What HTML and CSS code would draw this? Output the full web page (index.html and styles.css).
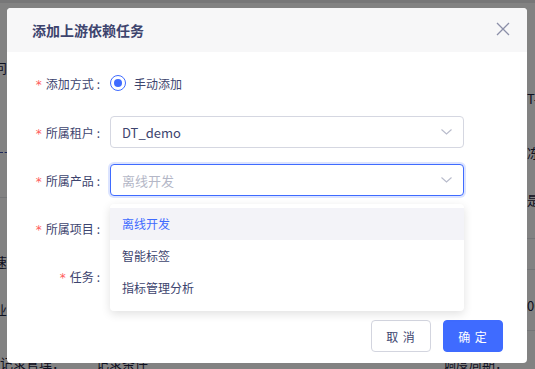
FILE: index.html
```html
<!DOCTYPE html>
<html lang="zh-CN">
<head>
    <meta charset="UTF-8">
    <title>添加上游依赖任务</title>
    <link rel="stylesheet" href="styles.css">
</head>
<body>
    <!-- page behind the modal -->
    <div class="page">
        <div class="page-topbar"></div>
        <div class="page-main">
            <div class="page-col page-col-left">
                <div class="bg-text bg-left" style="margin-top: 57px">问</div>
                <div class="bg-line bg-line-blue" style="margin-top: 76px"></div>
                <div class="bg-line" style="margin-top: 44px"></div>
                <div class="bg-text bg-left" style="margin-top: 56px">速</div>
                <div class="bg-text bg-left" style="margin-top: 32px">业</div>
            </div>
            <div class="page-col page-col-right">
                <div class="bg-text" style="margin-top: 88px">T-</div>
                <div class="bg-text" style="margin-top: 38px">冻</div>
                <div class="bg-text" style="margin-top: 31px">是</div>
                <div class="bg-line" style="margin-top: 30px"></div>
                <div class="bg-line" style="margin-top: 30px"></div>
                <div class="bg-text" style="margin-top: 28px">0C</div>
                <div class="bg-line" style="margin-top: 16px"></div>
            </div>
        </div>
        <div class="page-bottom">
            <span class="pb-label">记录管理：</span>
            <span class="pb-sep"></span>
            <span class="pb-sep pb-sep-2"></span>
            <span class="pb-value">记录条件</span>
            <span class="pb-sep pb-sep-3"></span>
            <span class="pb-label pb-right">调度周期：</span>
            <span class="pb-sep pb-sep-4"></span>
            <span class="pb-value">天</span>
        </div>
    </div>
    <div class="mask"></div>

    <div class="modal">
        <div class="modal-header">
            <span class="modal-title">添加上游依赖任务</span>
            <span class="modal-close">
                <svg width="14" height="14" viewBox="0 0 14 14">
                    <path d="M1 1 L13 13 M13 1 L1 13" stroke="#8b8fa8" stroke-width="1.3" fill="none"/>
                </svg>
            </span>
        </div>

        <div class="modal-body">
            <div class="form-row form-row-first">
                <label class="form-label"><span class="req">*</span>添加方式</label>
                <div class="form-control radio-group">
                    <span class="radio"><span class="radio-dot"></span></span>
                    <span>手动添加</span>
                </div>
            </div>
            <div class="form-row">
                <label class="form-label"><span class="req">*</span>所属租户</label>
                <div class="form-control">
                    <div class="select">
                        <span class="select-value">DT_demo</span>
                        <span class="select-arrow"><svg width="11" height="6" viewBox="0 0 11 6"><path d="M0.5 0.5 L5.5 5 L10.5 0.5" stroke="#b8bbcb" stroke-width="1.1" fill="none"/></svg></span>
                    </div>
                </div>
            </div>
            <div class="form-row">
                <label class="form-label"><span class="req">*</span>所属产品</label>
                <div class="form-control select-wrap">
                    <div class="select select-focused">
                        <span class="select-value placeholder">离线开发</span>
                        <span class="select-arrow"><svg width="11" height="6" viewBox="0 0 11 6"><path d="M0.5 0.5 L5.5 5 L10.5 0.5" stroke="#b8bbcb" stroke-width="1.1" fill="none"/></svg></span>
                    </div>
                    <ul class="dropdown">
                        <li class="dropdown-item active">离线开发</li>
                        <li class="dropdown-item">智能标签</li>
                        <li class="dropdown-item">指标管理分析</li>
                    </ul>
                </div>
            </div>
            <div class="form-row">
                <label class="form-label"><span class="req">*</span>所属项目</label>
                <div class="form-control"></div>
            </div>
            <div class="form-row">
                <label class="form-label"><span class="req">*</span>任务</label>
                <div class="form-control"></div>
            </div>
        </div>

        <div class="modal-footer">
            <button class="btn">取 消</button>
            <button class="btn btn-primary">确 定</button>
        </div>
    </div>
</body>
</html>
```

FILE: styles.css
```css
:root {
    --text: #3d446e;
    --blue: #3f6bff;
    --border: #d5d7e1;
    --placeholder: #b4b7c7;
    --font: "Noto Sans CJK SC", "Noto Sans", sans-serif;
}

* {
    box-sizing: border-box;
    margin: 0;
    padding: 0;
}

body {
    width: 535px;
    height: 369px;
    overflow: hidden;
    position: relative;
    font-family: var(--font);
    font-size: 12px;
    color: var(--text);
    background: #fff;
}

/* Page behind the modal */
.page {
    height: 100%;
    display: flex;
    flex-direction: column;
}

.page-topbar {
    height: 3px;
    background: #e9e9ec;
}

.page-main {
    flex: 1;
    display: flex;
    justify-content: space-between;
}

.page-col-left {
    width: 30px;
}

.page-col-right {
    width: 8px;
    display: flex;
    flex-direction: column;
}

.bg-text {
    font-size: 13px;
    line-height: 16px;
    color: #1d2240;
    white-space: nowrap;
}

.bg-left {
    margin-left: -6px;
}

.bg-line {
    height: 1px;
    background: #e4e5ea;
}

.bg-line-blue {
    border-top: 1px dashed #3a4fb0;
    background: none;
    width: 26px;
}

.page-bottom {
    height: 12px;
    display: flex;
    align-items: flex-start;
    font-size: 13px;
    line-height: 16px;
    color: #1d2240;
    white-space: nowrap;
}

.pb-label {
    margin-top: -2px;
}

.pb-sep {
    width: 1px;
    height: 12px;
    background: #e4e5ea;
    margin-left: 7px;
}

.pb-sep-2 {
    margin-left: 15px;
}

.pb-value {
    margin-left: 9px;
    margin-top: -2px;
}

.pb-sep-3 {
    margin-left: 240px;
}

.pb-right {
    margin-left: 55px;
}

.pb-sep-4 {
    margin-left: 30px;
}

.mask {
    position: absolute;
    inset: 0;
    background: rgba(0, 0, 0, 0.49);
}

/* Modal */
.modal {
    position: absolute;
    left: 7px;
    top: 8px;
    width: 520px;
    height: 355px;
    background: #fff;
    border-radius: 4px;
    display: flex;
    flex-direction: column;
}

.modal-header {
    height: 44px;
    flex: none;
    display: flex;
    align-items: center;
    justify-content: space-between;
    padding: 0 17px 0 25px;
    background: #f7f7f8;
    border-radius: 4px 4px 0 0;
}

.modal-title {
    font-size: 14px;
    font-weight: 600;
    color: var(--text);
    margin-top: -1px;
}

.modal-close {
    display: flex;
    margin-top: -3px;
}

.modal-body {
    padding: 15px 63px 0 0;
    display: flex;
    flex-direction: column;
    gap: 16px;
}

.form-row {
    display: flex;
    align-items: center;
    height: 32px;
}

.form-row-first {
    margin-bottom: 1px;
}

.form-label {
    width: 103px;
    flex: none;
    text-align: right;
    padding-right: 10px;
    white-space: nowrap;
}

.form-label::after {
    content: ":";
    margin-left: 3px;
}

.req {
    color: #ff5c5c;
    margin-right: 4px;
    font-family: "DejaVu Sans", sans-serif;
}

.form-control {
    flex: 1;
    position: relative;
}

.radio-group {
    display: flex;
    align-items: center;
    gap: 8px;
}

.radio {
    width: 16px;
    height: 16px;
    border: 1px solid var(--blue);
    border-radius: 50%;
    display: flex;
    align-items: center;
    justify-content: center;
}

.radio-dot {
    width: 8px;
    height: 8px;
    border-radius: 50%;
    background: var(--blue);
}

.select {
    height: 32px;
    border: 1px solid var(--border);
    border-radius: 4px;
    display: flex;
    align-items: center;
    justify-content: space-between;
    padding: 0 11px;
    background: #fff;
}

.select-focused {
    border-color: var(--blue);
    box-shadow: 0 0 0 2px rgba(63, 107, 255, 0.18);
}

.select-value {
    font-size: 13px;
}

.placeholder {
    color: var(--placeholder);
}

.select-arrow {
    display: flex;
}

/* Dropdown menu */
.dropdown {
    position: absolute;
    top: 40px;
    left: 0;
    right: 0;
    list-style: none;
    background: #fff;
    border-radius: 4px;
    padding: 4px 0 7px;
    box-shadow: 0 3px 10px rgba(0, 0, 0, 0.12);
    z-index: 2;
}

.dropdown-item {
    height: 32px;
    line-height: 32px;
    padding-left: 12px;
    font-size: 12px;
    color: var(--text);
}

.dropdown-item.active {
    background: #f3f3f8;
    color: var(--blue);
}

/* Footer */
.modal-footer {
    margin-top: auto;
    display: flex;
    justify-content: flex-end;
    gap: 12px;
    padding: 0 24px 11px;
}

.btn {
    width: 60px;
    height: 32px;
    border: 1px solid #d3d5df;
    border-radius: 4px;
    background: #fff;
    font-family: var(--font);
    font-size: 12px;
    color: var(--text);
    letter-spacing: 1px;
}

.btn-primary {
    background: var(--blue);
    border-color: var(--blue);
    color: #fff;
}
```
